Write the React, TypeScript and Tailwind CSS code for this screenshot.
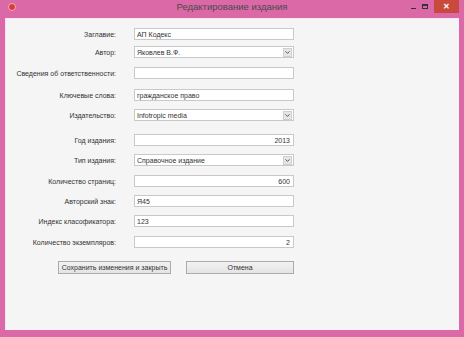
import { ChevronDown } from "lucide-react";

type Row = {
  label: string;
  value: string;
  kind: "text" | "num" | "combo";
  gap: string;
};

const rows: Row[] = [
  { label: "Заглавие:", value: "АП Кодекс", kind: "text", gap: "mt-0" },
  { label: "Автор:", value: "Яковлев В.Ф.", kind: "combo", gap: "mt-[6px]" },
  { label: "Сведения об ответственности:", value: "", kind: "text", gap: "mt-[9px]" },
  { label: "Ключевые слова:", value: "гражданское право", kind: "text", gap: "mt-[10px]" },
  { label: "Издательство:", value: "Infotropic media", kind: "combo", gap: "mt-[8px]" },
  { label: "Год издания:", value: "2013", kind: "num", gap: "mt-[13px]" },
  { label: "Тип издания:", value: "Справочное издание", kind: "combo", gap: "mt-[8px]" },
  { label: "Количество страниц:", value: "600", kind: "num", gap: "mt-[9px]" },
  { label: "Авторский знак:", value: "Я45", kind: "text", gap: "mt-[8px]" },
  { label: "Индекс класофикатора:", value: "123", kind: "text", gap: "mt-[8px]" },
  { label: "Количество экземпляров:", value: "2", kind: "num", gap: "mt-[9px]" },
];

const Field = ({ row }: { row: Row }) => {
  if (row.kind === "combo") {
    return (
      <div className="w-[160px] h-[12px] bg-white border border-[#c9c9c9] flex items-center pl-[2px]">
        <span className="flex-1 leading-none">{row.value}</span>
        <span className="w-[9px] h-[9px] mr-[1px] bg-[#e6e6e6] border border-[#cfcfcf] flex items-center justify-center">
          <ChevronDown className="w-[7px] h-[7px] text-[#444]" strokeWidth={3} />
        </span>
      </div>
    );
  }
  return (
    <div
      className={
        row.kind === "num"
          ? "w-[160px] h-[12px] bg-white border border-[#c9c9c9] flex items-center justify-end pr-[3px]"
          : "w-[160px] h-[12px] bg-white border border-[#c9c9c9] flex items-center pl-[2px]"
      }
    >
      <span className="leading-none">{row.value}</span>
    </div>
  );
};

const App = () => {
  return (
    <div
      className="w-[464px] h-[337px] bg-[#db69a8] flex flex-col text-[#333]"
      style={{ fontFamily: '"Liberation Sans", Arial, sans-serif' }}
    >
      {/* title bar */}
      <div className="h-[18px] flex items-start relative">
        <div className="w-[8px] h-[8px] rounded-full bg-[#d93a3a] border border-[#f4b0b0] ml-[8px] mt-[3px]" />
        <div className="absolute left-0 right-0 top-[2px] text-center text-[9.5px] text-[#4a4a4a] leading-none">
          Редактирование издания
        </div>
        <div className="ml-auto flex items-start h-[13px]">
          <div className="w-[12px] h-[13px] flex items-end justify-center pb-[4px]">
            <div className="w-[5px] h-[1px] bg-[#333]" />
          </div>
          <div className="w-[12px] h-[13px] flex items-center justify-center">
            <div className="w-[6px] h-[5px] border border-[#333] border-t-2" />
          </div>
          <div className="w-[25px] h-[13px] bg-[#c94a3c] ml-[3px] mr-[5px] flex items-center justify-center text-white text-[8px] font-bold leading-none">
            ✕
          </div>
        </div>
      </div>

      {/* client area */}
      <div className="mx-[5px] mb-[7px] flex-1 bg-[#f5f5f5] border-l border-t border-[#fbe3ef] pt-[9px] text-[7px]">
        {rows.map((row) => (
          <div key={row.label} className={`flex items-center ${row.gap}`}>
            <div className="w-[110px] text-right pr-0 leading-none">{row.label}</div>
            <div className="ml-[18px]">
              <Field row={row} />
            </div>
          </div>
        ))}
        <div className="flex mt-[13px] pl-[52px] gap-[15px]">
          <button className="w-[113px] h-[13px] bg-gradient-to-b from-[#f2f2f2] to-[#e4e4e4] border border-[#acacac] text-[7px] leading-none">
            Сохранить изменения и закрыть
          </button>
          <button className="w-[108px] h-[13px] bg-gradient-to-b from-[#f2f2f2] to-[#e4e4e4] border border-[#acacac] text-[7px] leading-none">
            Отмена
          </button>
        </div>
      </div>
    </div>
  );
};

export default App;
